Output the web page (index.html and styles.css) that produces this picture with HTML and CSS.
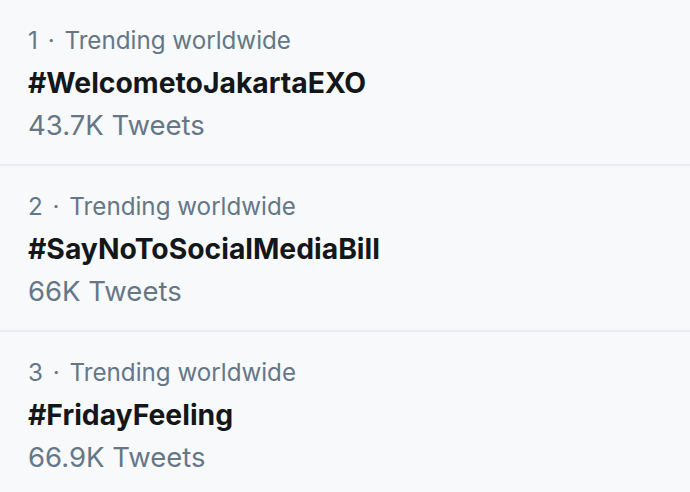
FILE: index.html
```html
<!DOCTYPE html>
<html>
<head>
<meta charset="utf-8">
<link rel="stylesheet" href="styles.css">
</head>
<body>
<div class="trends">
  <div class="trend">
    <div class="meta">1 <span class="dot">·</span> Trending worldwide</div>
    <div class="tag">#WelcometoJakartaEXO</div>
    <div class="count">43.7K Tweets</div>
  </div>
  <div class="trend">
    <div class="meta">2 <span class="dot">·</span> Trending worldwide</div>
    <div class="tag">#SayNoToSocialMediaBill</div>
    <div class="count">66K Tweets</div>
  </div>
  <div class="trend">
    <div class="meta">3 <span class="dot">·</span> Trending worldwide</div>
    <div class="tag">#FridayFeeling</div>
    <div class="count">66.9K Tweets</div>
  </div>
</div>
</body>
</html>
```
FILE: styles.css
```css
html, body {
  margin: 0;
  padding: 0;
  background: #f7f9fa;
}
body {
  font-family: Inter, "Liberation Sans", sans-serif;
  width: 690px;
  height: 492px;
  overflow: hidden;
}
.trends {
  display: flex;
  flex-direction: column;
}
.trend {
  padding: 20px 28px 18px 28px;
  border-bottom: 2px solid #e8ebef;
}
.meta {
  font-size: 24.2px;
  line-height: 42px;
  color: #657786;
}
.dot {
  padding: 0 3px;
}
.tag {
  font-size: 28.3px;
  line-height: 43px;
  font-weight: 700;
  color: #14171a;
}
.count {
  font-size: 27.5px;
  line-height: 41px;
  color: #657786;
}
```
